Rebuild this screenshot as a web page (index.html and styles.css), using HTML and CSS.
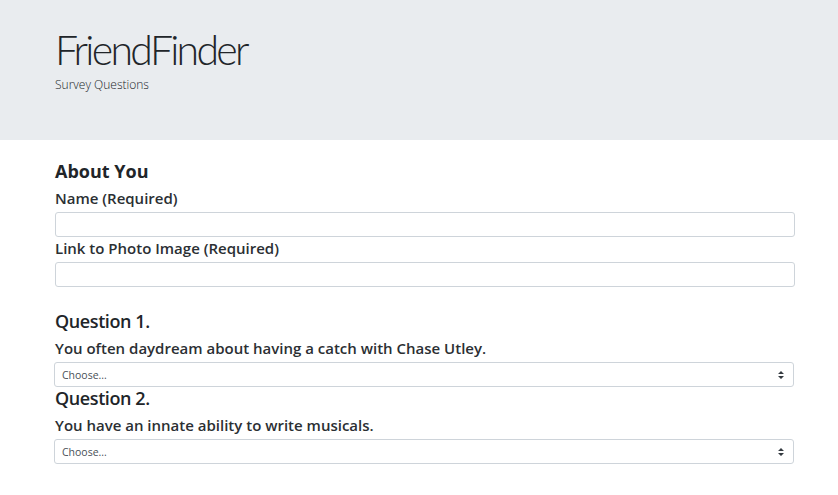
FILE: index.html
```html
<!DOCTYPE html>
<html lang="en">
<head>
<meta charset="utf-8">
<title>FriendFinder</title>
<link rel="stylesheet" href="styles.css">
</head>
<body>
<header class="jumbo">
  <div class="container">
    <h1 class="title">FriendFinder</h1>
    <p class="sub">Survey Questions</p>
  </div>
</header>
<main class="container">
  <form class="survey">
    <h3 class="section-title">About You</h3>
    <label class="label" for="name">Name (Required)</label>
    <input class="field" id="name" type="text">
    <label class="label label-gap" for="photo">Link to Photo Image (Required)</label>
    <input class="field" id="photo" type="text">

    <h4 class="question question-first">Question 1.</h4>
    <label class="label" for="q1">You often daydream about having a catch with Chase Utley.</label>
    <select class="choice" id="q1">
      <option>Choose...</option>
    </select>

    <h4 class="question">Question 2.</h4>
    <label class="label" for="q2">You have an innate ability to write musicals.</label>
    <select class="choice" id="q2">
      <option>Choose...</option>
    </select>

    <h4 class="question question-next">Question 3.</h4>
  </form>
</main>
</body>
</html>
```

FILE: styles.css
```css
html, body {
  margin: 0;
  padding: 0;
}

body {
  font-family: "Open Sans", "Noto Sans", sans-serif;
  color: #212529;
  background: #fff;
  overflow: hidden;
}

.container {
  margin-left: 55px;
  width: 740px;
}

.jumbo {
  background: #e9ecef;
  height: 140px;
  padding-top: 25px;
  box-sizing: border-box;
}

.title {
  margin: 0;
  font-family: Lato, "Open Sans", sans-serif;
  font-size: 41px;
  line-height: 49px;
  font-weight: 300;
  letter-spacing: -2.7px;
  color: #212529;
}

.sub {
  margin: 2px 0 0;
  font-size: 12px;
  line-height: 18px;
  font-weight: 300;
  color: #212529;
}

.survey {
  display: flex;
  flex-direction: column;
  align-items: stretch;
  padding-top: 20px;
}

.section-title {
  margin: 0;
  font-size: 18px;
  line-height: 22px;
  font-weight: 700;
}

.label {
  display: block;
  margin: 6px 0 4px;
  font-size: 15px;
  line-height: 20px;
  font-weight: 600;
  color: #2b2f33;
}

.label-gap {
  margin-top: 1px;
}

.field {
  display: block;
  box-sizing: border-box;
  height: 25px;
  width: 100%;
  margin: 0;
  border: 1px solid #ced4da;
  border-radius: 3px;
  background: #fff;
  font: inherit;
  padding: 0 8px;
}

.question {
  margin: 0;
  font-size: 18px;
  line-height: 22px;
  font-weight: 600;
  letter-spacing: -0.4px;
}

.question-first {
  margin-top: 23px;
}

.question-next {
  margin-top: 28px;
}

.choice {
  display: block;
  box-sizing: border-box;
  height: 25px;
  width: 100%;
  margin: 0 0 0 -1px;
  border: 1px solid #ced4da;
  border-radius: 3px;
  padding: 0 24px 0 7px;
  font-family: "Open Sans", "Noto Sans", sans-serif;
  font-size: 10.5px;
  color: #495057;
  background-color: #fff;
  background-image: url("data:image/svg+xml,%3Csvg xmlns='http://www.w3.org/2000/svg' width='6' height='8' viewBox='0 0 6 8'%3E%3Cpath fill='%23343a40' d='M3 0L0 3h6zM3 8L0 5h6z'/%3E%3C/svg%3E");
  background-repeat: no-repeat;
  background-position: right 9px center;
  background-size: 6px 8px;
  -webkit-appearance: none;
  appearance: none;
}
```
